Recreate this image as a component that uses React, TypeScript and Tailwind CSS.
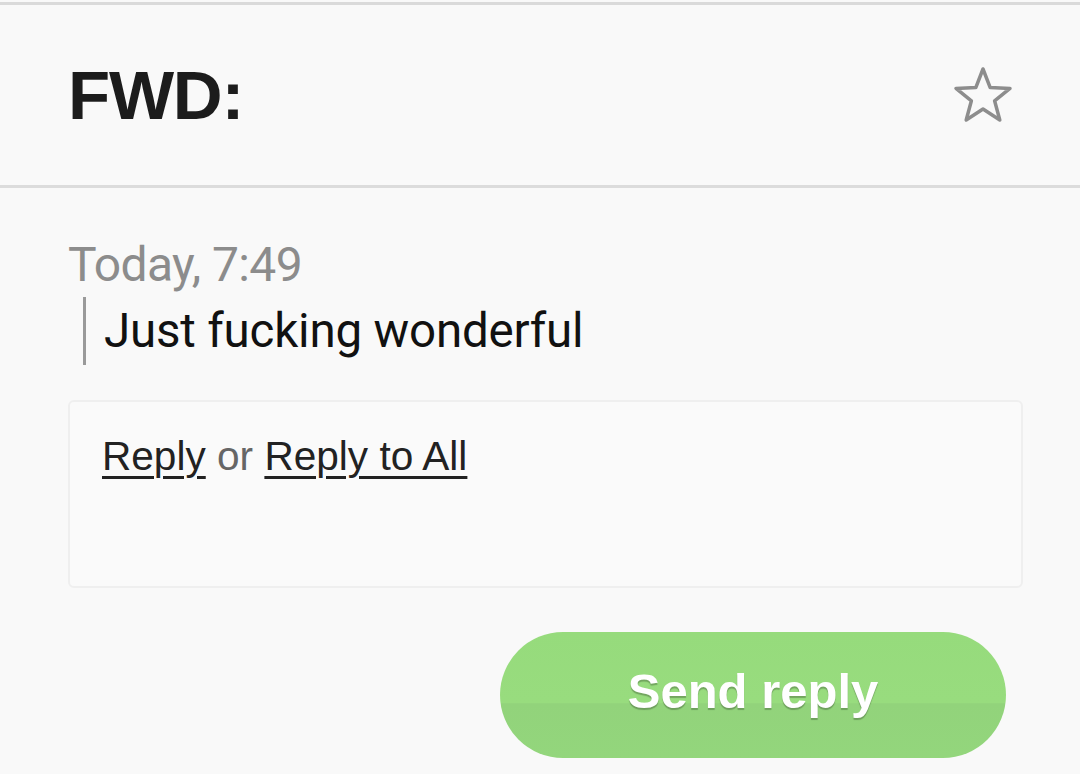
import { useState } from "react";

function StarIcon() {
    return (
        <svg width="62" height="58" viewBox="0 0 62 58" fill="none">
            <path
                d="M31 3 L38.2 21.6 L58 22.4 L42.6 34.8 L47.8 54 L31 43 L14.2 54 L19.4 34.8 L4 22.4 L23.8 21.6 Z"
                stroke="#8d8d8d"
                strokeWidth="3.5"
                strokeLinejoin="round"
            />
        </svg>
    )
}

export default function App() {
    const [starred, setStarred] = useState(false)

    return (
        <div className="w-[1080px] h-[774px] bg-[#f9f9f9] overflow-hidden" style={{ fontFamily: "Roboto, 'Liberation Sans', sans-serif" }}>
            <div className="h-[3px] mt-[2px] bg-[#dadada]" />

            <header className="h-[183px] flex items-center justify-between pl-[68px] pr-[66px] border-b-[3px] border-[#dcdcdc]">
                <h1 className="text-[69px] font-bold text-[#1c1c1c] tracking-[-1.2px] pt-[2px]" style={{ fontFamily: "'Liberation Sans', Arial, sans-serif" }}>FWD:</h1>
                <button onClick={() => setStarred(!starred)} className="pb-[1px]">
                    <StarIcon />
                </button>
            </header>

            <section className="pl-[68px] pr-[57px] pt-[50px]">
                <div className="text-[48px] leading-[54px] text-[#8c8c8c] tracking-[-0.6px]">Today, 7:49</div>
                <div className="flex mt-[5px] ml-[15px]">
                    <div className="w-[3px] h-[68px] bg-[#9a9a9a]" />
                    <p className="pl-[18px] text-[47.5px] leading-[68px] text-[#111] tracking-[-0.2px]">Just fucking wonderful</p>
                </div>

                <div className="mt-[35px] h-[188px] rounded-[6px] border-[2px] border-[#efefef] bg-[#fafafa] px-[32px] pt-[28px]">
                    <p className="text-[40.6px] leading-[52px] text-[#666]" style={{ fontFamily: "'Liberation Sans', Arial, sans-serif" }}>
                        <a className="text-[#222] underline decoration-[3px] underline-offset-[6px]">Reply</a>
                        {" or "}
                        <a className="text-[#222] underline decoration-[3px] underline-offset-[6px]">Reply to All</a>
                    </p>
                </div>

                <div className="flex justify-end pr-[17px] mt-[44px]">
                    <button className="w-[506px] h-[126px] rounded-full bg-[linear-gradient(180deg,#96db7c_0%,#98dc7e_56%,#92d37b_57%,#93d67c_100%)] text-white text-[49px] font-bold [text-shadow:0_2px_1px_rgba(0,0,0,0.25)] pb-[6px]" style={{ fontFamily: "'Liberation Sans', Arial, sans-serif" }}>
                        Send reply
                    </button>
                </div>
            </section>
        </div>
    )
}
